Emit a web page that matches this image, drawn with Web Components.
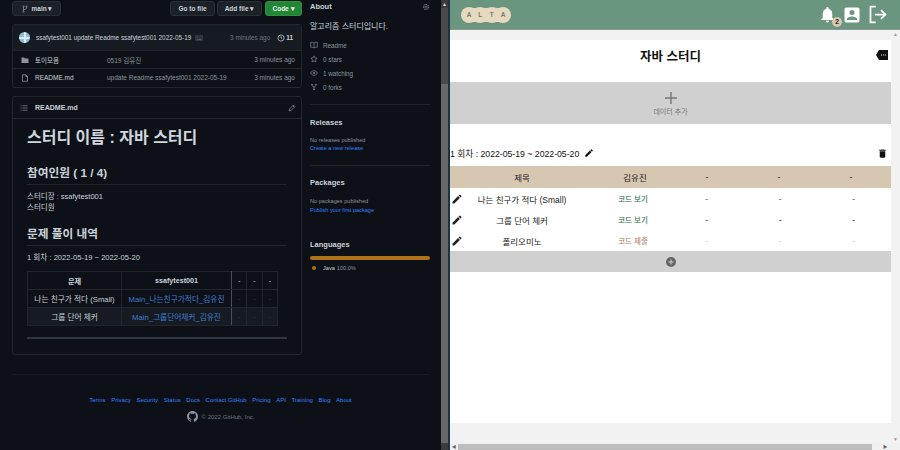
<!DOCTYPE html>
<html lang="ko">
<head>
<meta charset="utf-8">
<title>study</title>
<style>
html, body { margin: 0; height: 100%; overflow: hidden; background: #0d1117; }
body { font-family: "Liberation Sans", "Noto Sans CJK KR", sans-serif; }
</style>
</head>
<body>
<app-shell>
  <repo-pane slot="left"></repo-pane>
  <study-pane slot="right"></study-pane>
</app-shell>

<script>
const icons = {
  branch: '<path d="M5 3v10M11 3v3c0 2-2 3-6 3" fill="none" stroke="currentColor" stroke-width="1.5"/><circle cx="5" cy="3" r="1.6" fill="none" stroke="currentColor"/><circle cx="11" cy="3" r="1.6" fill="none" stroke="currentColor"/><circle cx="5" cy="13" r="1.6" fill="none" stroke="currentColor"/>',
  clock: '<circle cx="8" cy="8" r="6.2" fill="none" stroke="currentColor" stroke-width="1.5"/><path d="M8 4.5V8l2.5 1.5" fill="none" stroke="currentColor" stroke-width="1.4"/>',
  folder: '<path d="M1 3h5l2 2h7v9H1z" fill="currentColor"/>',
  file: '<path d="M3 1.5h6.5L13 5v9.5H3z M9.5 1.5V5H13" fill="none" stroke="currentColor" stroke-width="1.4"/>',
  list: '<path d="M5 3.5h10M5 8h10M5 12.5h10M1 3.5h2M1 8h2M1 12.5h2" fill="none" stroke="currentColor" stroke-width="1.4"/>',
  ghPencil: '<path d="M2 14l1-4 8-8 3 3-8 8z M9.500 3.500l3 3" fill="none" stroke="currentColor" stroke-width="1.3"/>',
  gear: '<circle cx="8" cy="8" r="2.300" fill="none" stroke="currentColor" stroke-width="1.300"/><circle cx="8" cy="8" r="5.300" fill="none" stroke="currentColor" stroke-width="2" stroke-dasharray="2 1.500"/>',
  book: '<path d="M8 4C6.500 2.500 4 2.500 1.500 2.500v10c2.500 0 5 0 6.500 1.500 1.500-1.500 4-1.500 6.500-1.500v-10C12 2.500 9.500 2.500 8 4zM8 4v10" fill="none" stroke="currentColor" stroke-width="1.300"/>',
  star: '<path d="M8 1.800l1.900 4 4.300.6-3.100 3 .8 4.300L8 11.600l-3.900 2.100.8-4.300-3.100-3 4.300-.6z" fill="none" stroke="currentColor" stroke-width="1.300"/>',
  eye: '<path d="M1 8c1.800-3 4.200-4.500 7-4.500S13.200 5 15 8c-1.800 3-4.200 4.500-7 4.500S2.800 11 1 8z" fill="none" stroke="currentColor" stroke-width="1.300"/><circle cx="8" cy="8" r="1.800" fill="currentColor"/>',
  fork: '<path d="M4 4c0 3 4 2.500 4 5v4M12 4c0 3-4 2.500-4 5" fill="none" stroke="currentColor" stroke-width="1.500"/><circle cx="4" cy="3" r="1.500" fill="currentColor"/><circle cx="12" cy="3" r="1.500" fill="currentColor"/><circle cx="8" cy="13" r="1.500" fill="currentColor"/>',
  octo: '<path fill="currentColor" d="M8 0C3.580 0 0 3.580 0 8c0 3.540 2.290 6.530 5.470 7.590.4.070.55-.170.550-.380 0-.190-.010-.820-.010-1.490-2.010.370-2.530-.490-2.690-.940-.090-.230-.480-.940-.820-1.130-.280-.150-.680-.520-.010-.530.630-.010 1.080.580 1.230.820.720 1.210 1.870.870 2.330.660.070-.520.280-.870.510-1.070-1.780-.200-3.640-.890-3.640-3.950 0-.870.310-1.590.820-2.150-.080-.200-.360-1.020.080-2.120 0 0 .670-.210 2.200.820.640-.180 1.320-.270 2-.270s1.360.090 2 .270c1.530-1.040 2.200-.820 2.200-.820.440 1.100.160 1.920.080 2.120.510.560.820 1.270.820 2.150 0 3.070-1.870 3.750-3.650 3.950.290.250.540.730.540 1.480 0 1.070-.010 1.930-.010 2.200 0 .210.150.460.550.380A8.010 8.010 0 0 0 16 8c0-4.420-3.580-8-8-8z"/>',
  pencil: '<path fill="currentColor" d="M3 17.250V21h3.750L17.810 9.940l-3.750-3.750L3 17.250zM20.710 7.040a1 1 0 0 0 0-1.410l-2.340-2.340a1 1 0 0 0-1.410 0l-1.830 1.830 3.750 3.750 1.830-1.830z"/>',
  trash: '<path fill="currentColor" d="M6 19c0 1.100.9 2 2 2h8c1.100 0 2-.9 2-2V7H6v12zM19 4h-3.500l-1-1h-5l-1 1H5v2h14V4z"/>',
  plus: '<path d="M12 3v18M3 12h18" fill="none" stroke="currentColor" stroke-width="2.200"/>',
  addCircle: '<path fill="currentColor" d="M12 2a10 10 0 1 0 0 20 10 10 0 0 0 0-20zm5 11h-4v4h-2v-4H7v-2h4V7h2v4h4v2z"/>',
  bell: '<path fill="currentColor" d="M12 22a2 2 0 0 0 2-2h-4a2 2 0 0 0 2 2zm6-6v-5c0-3.070-1.640-5.640-4.500-6.320V4a1.500 1.500 0 0 0-3 0v.680C7.630 5.360 6 7.920 6 11v5l-2 2v1h16v-1l-2-2z"/>',
  profile: '<path fill="currentColor" d="M3 5v14a2 2 0 0 0 2 2h14a2 2 0 0 0 2-2V5a2 2 0 0 0-2-2H5a2 2 0 0 0-2 2zm12 4a3 3 0 1 1-6 0 3 3 0 0 1 6 0zm-9 8c0-2 4-3.100 6-3.100s6 1.100 6 3.100v1H6v-1z"/>',
  logout: '<path d="M10 3H4v18h6" fill="none" stroke="currentColor" stroke-width="2"/><path d="M9 12h12M16 7l5 5-5 5" fill="none" stroke="currentColor" stroke-width="2"/>'
};

function svg(name, size, box) {
  const vb = box || 16;
  return `<svg width="${size}" height="${size}" viewBox="0 0 ${vb} ${vb}" style="display:block;flex:none">${icons[name]}</svg>`;
}

class AppShell extends HTMLElement {
  constructor() {
    super();
    this.attachShadow({ mode: 'open' });
    this.shadowRoot.innerHTML = `
    <style>
      :host { display: flex; width: 900px; height: 450px; overflow: hidden; }
      .left { width: 441px; height: 450px; overflow: hidden; flex: none; }
      .bar { width: 7px; height: 450px; flex: none; background: #4a4a4a; display: flex; flex-direction: column; }
      .bar .up { height: 8px; background: #3b3b3b; color: #ddd; font-size: 5px; line-height: 8px; text-align: center; }
      .bar .rest { height: 76px; }
      .bar .thumb { flex: 1; background: #686868; }
      .bar .down { height: 7px; background: #3b3b3b; }
      .split { width: 2px; flex: none; background: #1c3346; }
      .right { width: 450px; height: 450px; flex: none; overflow: hidden; }
    </style>
    <div class="left"><slot name="left"></slot></div>
    <div class="bar"><div class="up">▲</div><div class="rest"></div><div class="thumb"></div><div class="down"></div></div>
    <div class="split"></div>
    <div class="right"><slot name="right"></slot></div>`;
  }
}

class GhButton extends HTMLElement {
  constructor() {
    super();
    this.attachShadow({ mode: 'open' });
    this.shadowRoot.innerHTML = `
    <style>
      :host { display: flex; align-items: center; justify-content: center; gap: 3px; height: 15px; box-sizing: border-box;
        background: #1c2128; border: 1px solid #282e36; border-radius: 3px; color: #c9d1d9; font-size: 6.500px; font-weight: bold; }
      :host([primary]) { background: #238636; border-color: #2b9141; color: #e6f2e8; }
    </style>
    <slot></slot>`;
  }
}

class FileRow extends HTMLElement {
  constructor() {
    super();
    this.attachShadow({ mode: 'open' });
  }
  connectedCallback() {
    const icon = this.getAttribute('icon');
    this.shadowRoot.innerHTML = `
    <style>
      :host { display: grid; grid-template-columns: 14px 72px 1fr auto; align-items: center; height: 18px; padding: 0 6px 0 8px;
        font-size: 6.500px; color: #8b949e; border-top: 1px solid #21262d; box-sizing: border-box; }
      .ic { color: ${icon === 'folder' ? '#8b949e' : '#9aa3ac'}; }
      .name { color: #c9d1d9; }
    </style>
    <span class="ic">${svg(icon, 8)}</span>
    <span class="name">${this.getAttribute('name')}</span>
    <span>${this.getAttribute('message')}</span>
    <span>3 minutes ago</span>`;
  }
}

class ReadmeTable extends HTMLElement {
  constructor() {
    super();
    this.attachShadow({ mode: 'open' });
    this._rows = [
      ['나는 친구가 적다 (Small)', 'Main_나는친구가적다_김유진'],
      ['그룹 단어 체커', 'Main_그룹단어체커_김유진']
    ];
  }
  connectedCallback() {
    const body = this._rows.map((r, i) => `
      <tr class="${i % 2 ? 'alt' : ''}"><td>${r[0]}</td><td class="link">${r[1]}</td><td class="dim">-</td><td class="dim">-</td><td class="dim">-</td></tr>`).join('');
    this.shadowRoot.innerHTML = `
    <style>
      :host { display: block; }
      table { border-collapse: collapse; width: 251px; table-layout: fixed; font-size: 7.700px; color: #c9d1d9; }
      th, td { border: 1px solid #21262d; height: 17px; padding: 0; text-align: center; white-space: nowrap; overflow: hidden; }
      th { font-weight: bold; font-size: 7.200px; }
      th.sep, td.link { border-right-color: #484f58; }
      .alt td { background: #161b22; }
      .link { color: #3f7fd0; }
      .dim { color: #30363d; }
      th.dash { color: #8b949e; }
    </style>
    <table>
      <colgroup><col style="width:94px"><col style="width:110px"><col><col><col></colgroup>
      <thead><tr><th>문제</th><th class="sep">ssafytest001</th><th class="dash">-</th><th class="dash">-</th><th class="dash">-</th></tr></thead>
      <tbody>${body}</tbody>
    </table>`;
  }
}

class ReadmeBox extends HTMLElement {
  constructor() {
    super();
    this.attachShadow({ mode: 'open' });
    this.shadowRoot.innerHTML = `
    <style>
      :host { display: block; height: 259px; box-sizing: border-box; border: 1px solid #21262d; border-radius: 3px; color: #c9d1d9; overflow: hidden; }
      .head { height: 22px; display: flex; align-items: center; padding: 0 5px 0 7px; border-bottom: 1px solid #21262d; box-sizing: border-box; font-size: 7px; font-weight: bold; }
      .head .ic { color: #8b949e; margin-right: 7px; }
      .head .name { flex: 1; }
      .body { padding: 0 14px; }
      h1, h2, p { margin: 0; }
      h1 { font-size: 16px; line-height: 24px; margin-top: 7px; color: #d0d7de; }
      h2 { font-size: 11.700px; line-height: 16px; color: #c9d1d9; padding-bottom: 3px; border-bottom: 1px solid #21262d; }
      h2.a { margin-top: 15px; }
      h2.b { margin-top: 13px; }
      .people { margin-top: 6px; font-size: 7.500px; line-height: 11px; }
      .round { margin-top: 7px; margin-bottom: 8px; font-size: 7.600px; line-height: 10px; }
      .rule { height: 2px; width: 260px; background: #30363d; margin-top: 11px; }
    </style>
    <div class="head"><span class="ic">${svg('list', 8)}</span><span class="name">README.md</span><span class="ic" style="margin:0">${svg('ghPencil', 8)}</span></div>
    <div class="body">
      <h1>스터디 이름 : 자바 스터디</h1>
      <h2 class="a">참여인원 ( 1 / 4)</h2>
      <p class="people">스터디장 : ssafytest001<br>스터디원</p>
      <h2 class="b">문제 풀이 내역</h2>
      <p class="round">1 회차 : 2022-05-19 ~ 2022-05-20</p>
      <readme-table></readme-table>
      <div class="rule"></div>
    </div>`;
  }
}

class SideSection extends HTMLElement {
  constructor() {
    super();
    this.attachShadow({ mode: 'open' });
  }
  connectedCallback() {
    this.shadowRoot.innerHTML = `
    <style>
      :host { display: block; font-size: 5.600px; color: #8b949e; }
      h3 { margin: 0; font-size: 7.500px; line-height: 10px; color: #c9d1d9; font-weight: bold; }
      .content { margin-top: var(--gap, 9px); }
    </style>
    <h3>${this.getAttribute('heading')}</h3>
    <div class="content"><slot></slot></div>`;
  }
}

class RepoSidebar extends HTMLElement {
  constructor() {
    super();
    this.attachShadow({ mode: 'open' });
    const meta = (icon, text) => `<div class="meta">${svg(icon, 8)}<span>${text}</span></div>`;
    this.shadowRoot.innerHTML = `
    <style>
      :host { display: block; width: 120px; flex: none; }
      .gear { position: absolute; right: 0; top: 3px; color: #8b949e; }
      .wrap { position: relative; padding-top: 2px; }
      .desc { font-size: 8px; line-height: 12px; color: #c9d1d9; margin-bottom: 5px; }
      .meta { display: flex; align-items: center; gap: 5px; height: 14px; color: #8b949e; font-size: 6.300px; }
      hr { border: 0; border-top: 1px solid #21262d; margin: 0; }
      .small { line-height: 9px; }
      a { color: #2f81f7; display: block; line-height: 9px; }
      .bar { height: 4px; border-radius: 2px; background: #b07219; margin-bottom: 5px; }
      .lang { display: flex; align-items: center; gap: 2px; padding-left: 2px; font-size: 5.600px; }
      .dot { width: 4px; height: 4px; border-radius: 50%; background: #b07219; margin-right: 5px; }
      .lang b { color: #c9d1d9; font-weight: normal; }
    </style>
    <div class="wrap">
      <span class="gear">${svg('gear', 8)}</span>
      <side-section heading="About" style="--gap:9px">
        <div class="desc">알고리즘 스터디입니다.</div>
        ${meta('book', 'Readme')}${meta('star', '0 stars')}${meta('eye', '1 watching')}${meta('fork', '0 forks')}
      </side-section>
      <hr style="margin-top:10px">
      <side-section heading="Releases" style="margin-top:13px;--gap:8px">
        <div class="small">No releases published</div>
        <a style="margin-top:-1px">Create a new release</a>
      </side-section>
      <hr style="margin-top:12px">
      <side-section heading="Packages" style="margin-top:12px;--gap:9px">
        <div class="small">No packages published</div>
        <a>Publish your first package</a>
      </side-section>
      <side-section heading="Languages" style="margin-top:25px;--gap:6px">
        <div class="bar"></div>
        <div class="lang"><span class="dot"></span><b>Java</b><span>100.0%</span></div>
      </side-section>
    </div>`;
  }
}

class RepoFooter extends HTMLElement {
  constructor() {
    super();
    this.attachShadow({ mode: 'open' });
    const links = ['Terms', 'Privacy', 'Security', 'Status', 'Docs', 'Contact GitHub', 'Pricing', 'API', 'Training', 'Blog', 'About'];
    this.shadowRoot.innerHTML = `
    <style>
      :host { display: block; margin: 19px 12px 0; width: 417px; box-sizing: border-box; border-top: 1px solid #161b22; font-size: 6px; color: #6e7681; }
      .links { display: flex; justify-content: center; gap: 5.600px; color: #2f81f7; margin-top: 21px; line-height: 8px; }
      .copy { display: flex; justify-content: center; align-items: center; gap: 4px; margin-top: 7px; }
      .copy span:first-child { color: #8b949e; }
    </style>
    <div class="links">${links.map(l => `<span>${l}</span>`).join('')}</div>
    <div class="copy"><span>${svg('octo', 11)}</span><span>© 2022 GitHub, Inc.</span></div>`;
  }
}

class RepoPane extends HTMLElement {
  constructor() {
    super();
    this.attachShadow({ mode: 'open' });
    this.shadowRoot.innerHTML = `
    <style>
      :host { display: block; width: 441px; height: 450px; background: #0d1117; overflow: hidden; color: #c9d1d9; }
      .cols { display: flex; gap: 8px; padding-left: 12px; }
      main { width: 290px; flex: none; padding-top: 1px; }
      .tools { display: flex; gap: 2px; height: 15px; }
      .spacer { flex: 1; }
      .files { margin-top: 8px; border: 1px solid #21262d; border-radius: 3px; height: 64px; box-sizing: border-box; overflow: hidden; }
      .commit { height: 25px; background: #161b22; display: flex; align-items: center; padding: 0 8px 0 6px; font-size: 6.400px; color: #c9d1d9; }
      .avatar { width: 11px; height: 11px; border-radius: 50%; margin-right: 6px; flex: none;
        background: linear-gradient(#dcecf5, #dcecf5) center / 100% 2px no-repeat, linear-gradient(#dcecf5, #dcecf5) center / 2px 100% no-repeat, #8fbcd9; }
      .ell { background: #30363d; color: #c9d1d9; font-size: 5px; border-radius: 1px; padding: 0 2px; margin-left: 4px; line-height: 6px; }
      .ago { color: #6e7681; margin-left: auto; margin-right: 7px; }
      .hist { display: flex; align-items: center; gap: 1px; font-weight: bold; }
      .gap { height: 8px; }
    </style>
    <div class="cols">
      <main>
        <div class="tools">
          <gh-button style="width:49px;color:#8b949e">${svg('branch', 8)}<span style="color:#c9d1d9">main ▾</span></gh-button>
          <span class="spacer"></span>
          <gh-button style="width:45px">Go to file</gh-button>
          <gh-button style="width:45px">Add file ▾</gh-button>
          <gh-button primary style="width:37px;margin-left:1px">Code ▾</gh-button>
        </div>
        <div class="files">
          <div class="commit">
            <span class="avatar"></span>
            <span>ssafytest001 update Readme ssafytest001 2022-05-19</span>
            <span class="ell">...</span>
            <span class="ago">3 minutes ago</span>
            <span class="hist">${svg('clock', 8)}11</span>
          </div>
          <file-row icon="folder" name="토이모음" message="0519 김유진"></file-row>
          <file-row icon="file" name="README.md" message="update Readme ssafytest001 2022-05-19"></file-row>
        </div>
        <div class="gap"></div>
        <readme-box></readme-box>
      </main>
      <repo-sidebar></repo-sidebar>
    </div>
    <repo-footer></repo-footer>`;
  }
}

class AltaLogo extends HTMLElement {
  constructor() {
    super();
    this.attachShadow({ mode: 'open' });
    this.shadowRoot.innerHTML = `
    <style>
      :host { display: flex; width: 50px; height: 16px; color: #6f7f72; font-size: 6.500px; font-weight: bold;
        background: linear-gradient(#e7d8c0, #e7d8c0) center / 40px 14px no-repeat; }
      span { width: 16px; height: 16px; flex: none; border-radius: 50%; background: #e7d8c0; display: flex; align-items: center; justify-content: center; }
      span + span { margin-left: -4.670px; }
    </style>
    <span>A</span><span>L</span><span>T</span><span>A</span>`;
  }
}

class StudyHeader extends HTMLElement {
  constructor() {
    super();
    this.attachShadow({ mode: 'open' });
    this.shadowRoot.innerHTML = `
    <style>
      :host { display: flex; align-items: center; height: 30px; box-sizing: border-box; padding: 0 12px 0 11px; background: #6a9680; color: #fff; border-bottom: 1px solid #8a9a90; }
      .right { margin-left: auto; display: flex; align-items: center; gap: 5px; }
      .bell { position: relative; display: block; }
      .badge { position: absolute; right: -5px; bottom: -3px; width: 10px; height: 10px; border-radius: 50%; background: #d6c7b0; color: #222; font-size: 6.500px; font-weight: bold; line-height: 10px; text-align: center; }
    </style>
    <alta-logo></alta-logo>
    <div class="right">
      <span class="bell">${svg('bell', 19, 24)}<span class="badge">2</span></span>
      <span>${svg('profile', 20, 24)}</span>
      <span>${svg('logout', 21, 24)}</span>
    </div>`;
  }
}

class RoundTable extends HTMLElement {
  constructor() {
    super();
    this.attachShadow({ mode: 'open' });
    this._rows = [
      { title: '나는 친구가 적다 (Small)', code: '코드 보기', cls: 'view', dash: '#555' },
      { title: '그룹 단어 체커', code: '코드 보기', cls: 'view', dash: '#222' },
      { title: '폴리오미노', code: '코드 제출', cls: 'submit', dash: '#ccc' }
    ];
  }
  connectedCallback() {
    const rows = this._rows.map(r => `
      <div class="row">
        <span class="pen">${svg('pencil', 12, 24)}</span>
        <span class="title">${r.title}</span>
        <span class="${r.cls}">${r.code}</span>
        ${`<span style="color:${r.dash}">-</span>`.repeat(3)}
      </div>`).join('');
    this.shadowRoot.innerHTML = `
    <style>
      :host { display: block; font-size: 8.500px; color: #222; }
      .head { display: grid; grid-template-columns: 149px 72px 72px 72px 72px; height: 22px; align-items: center; background: #d5c7b0; text-align: center; }
      .head .t { padding-right: 5px; }
      .row { display: grid; grid-template-columns: 14px 132px 74px 73.500px 73.500px 73.500px; height: 21px; align-items: center; text-align: center; }
      .pen { color: #222; display: flex; justify-content: flex-end; padding-right: 1px; }
      .title { padding-right: 16px; }
      .view { color: #6a9680; font-size: 7.500px; font-weight: bold; }
      .submit { color: #c4a595; font-size: 7.500px; font-weight: bold; }
      .add { height: 21px; background: #d0d0d0; display: flex; align-items: center; justify-content: center; color: #666; }
    </style>
    <div class="head"><span class="t">제목</span><span>김유진</span><span>-</span><span>-</span><span>-</span></div>
    ${rows}
    <div class="add">${svg('addCircle', 12, 24)}</div>`;
  }
}

class StudyPane extends HTMLElement {
  constructor() {
    super();
    this.attachShadow({ mode: 'open' });
    this.shadowRoot.innerHTML = `
    <style>
      :host { display: block; width: 450px; height: 450px; background: #f2f2f2; color: #111; overflow: hidden; }
      .view { display: flex; height: 413px; }
      .scroll { width: 441px; flex: none; }
      .page { margin-top: 10px; height: 383px; background: #fff; }
      .vbar { width: 9px; flex: none; color: #999; font-size: 5px; text-align: center; display: flex; flex-direction: column; justify-content: space-between; padding: 1px 0; box-sizing: border-box; background: #f2f2f2; }
      .title { height: 42px; box-sizing: border-box; padding-bottom: 12px; display: flex; align-items: center; justify-content: center; position: relative; font-size: 12.500px; font-weight: bold; }
      .title svg { position: absolute; right: 3px; top: 10px; }
      .adddata { height: 42px; background: #d0d0d0; display: flex; flex-direction: column; align-items: center; justify-content: center; color: #777; font-size: 7px; gap: 0; }
      .round { height: 42px; box-sizing: border-box; padding: 16px 3px 0 0; display: flex; align-items: center; font-size: 8.700px; gap: 5px; }
      .round .end { margin-left: auto; }
      .hscroll { height: 7px; display: flex; background: #f0f0f0; align-items: center; color: #666; font-size: 4.500px; line-height: 7px; overflow: hidden; }
      .hscroll .l { width: 8px; text-align: center; }
      .hscroll i { width: 414px; height: 6px; background: #bdbdbd; display: block; }
      .hscroll .r { margin-left: 11px; }
    </style>
    <study-header></study-header>
    <div class="view">
      <div class="scroll">
        <div class="page">
          <div class="title">자바 스터디
            <svg width="12" height="10" viewBox="0 0 12 10"><path fill="#111" d="M3 0h9v10H3L0 5z"/><path d="M5 5h1M7 5h1M9 5h1" stroke="#fff" stroke-width="1"/></svg>
          </div>
          <div class="adddata">${svg('plus', 16, 24)}<span>데이터 추가</span></div>
          <div class="round"><span>1 회차 : 2022-05-19 ~ 2022-05-20</span>${svg('pencil', 10, 24)}<span class="end">${svg('trash', 11, 24)}</span></div>
          <round-table></round-table>
        </div>
      </div>
      <div class="vbar"><span>▲</span><span>▼</span></div>
    </div>
    <div class="hscroll"><span class="l">◀</span><i></i><span class="r">▶</span></div>`;
  }
}

customElements.define('app-shell', AppShell);
customElements.define('gh-button', GhButton);
customElements.define('file-row', FileRow);
customElements.define('readme-table', ReadmeTable);
customElements.define('readme-box', ReadmeBox);
customElements.define('side-section', SideSection);
customElements.define('repo-sidebar', RepoSidebar);
customElements.define('repo-footer', RepoFooter);
customElements.define('repo-pane', RepoPane);
customElements.define('alta-logo', AltaLogo);
customElements.define('study-header', StudyHeader);
customElements.define('round-table', RoundTable);
customElements.define('study-pane', StudyPane);
</script>
</body>
</html>
